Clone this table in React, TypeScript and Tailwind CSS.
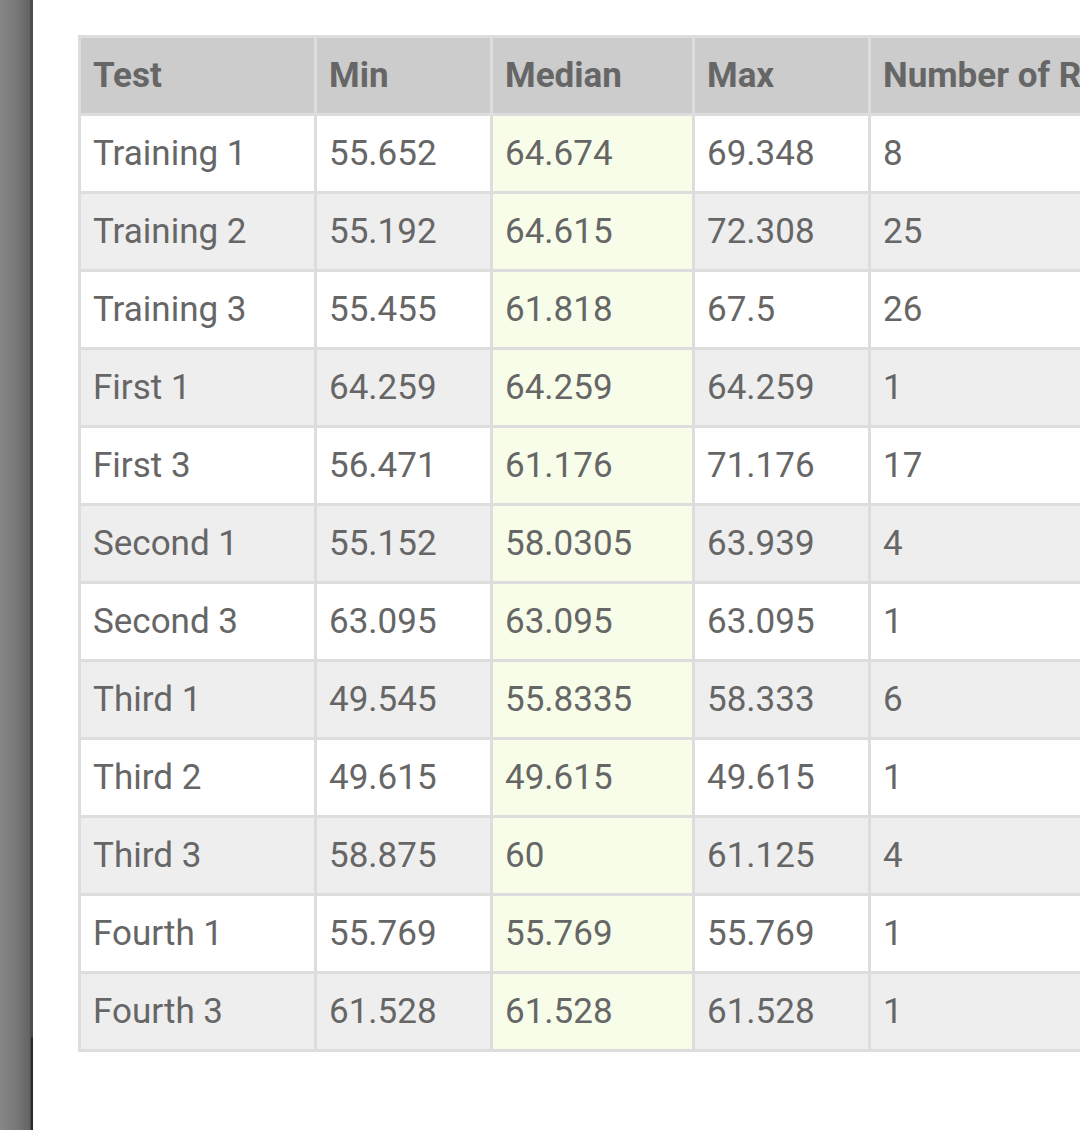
import React from "react";

const rows: [string, string, string, string, string][] = [
  ["Training 1", "55.652", "64.674", "69.348", "8"],
  ["Training 2", "55.192", "64.615", "72.308", "25"],
  ["Training 3", "55.455", "61.818", "67.5", "26"],
  ["First 1", "64.259", "64.259", "64.259", "1"],
  ["First 3", "56.471", "61.176", "71.176", "17"],
  ["Second 1", "55.152", "58.0305", "63.939", "4"],
  ["Second 3", "63.095", "63.095", "63.095", "1"],
  ["Third 1", "49.545", "55.8335", "58.333", "6"],
  ["Third 2", "49.615", "49.615", "49.615", "1"],
  ["Third 3", "58.875", "60", "61.125", "4"],
  ["Fourth 1", "55.769", "55.769", "55.769", "1"],
  ["Fourth 3", "61.528", "61.528", "61.528", "1"],
];

const headers = ["Test", "Min", "Median", "Max", "Number of Results"];

export default function App() {
  return (
    <div
      className="flex h-[1130px] w-[1080px] overflow-hidden bg-white text-[#666]"
      style={{ fontFamily: "Roboto, 'Noto Sans', sans-serif" }}
    >
      <div className="relative h-full w-[33px] shrink-0 bg-gradient-to-r from-[#878787] via-[#777] to-[#5f5f5f]">
        <div className="absolute right-0 top-0 h-full w-[3px] bg-[#4d4d4d]" />
        <div className="absolute right-0 top-[1037px] bottom-0 w-[2px] bg-[#1f3320]" />
      </div>
      <div className="pl-[45px] pt-[35px]">
        <div className="grid w-max grid-cols-[233px_173px_199px_173px_320px] gap-[3px] bg-[#dddddd] p-[3px] text-[35px] leading-none">
          {headers.map((h) => (
            <div
              key={h}
              className="flex h-[75px] items-center whitespace-nowrap bg-[#cccccc] px-[12px] pb-[1px] font-bold"
            >
              {h}
            </div>
          ))}
          {rows.map((r, i) => {
            const bg = i % 2 === 0 ? "bg-white" : "bg-[#eeeeee]";
            return (
              <React.Fragment key={r[0]}>
                {r.map((c, j) => (
                  <div
                    key={j}
                    className={`flex h-[75px] items-center whitespace-nowrap px-[12px] pb-[1px] ${
                      j === 2 ? "bg-[#f7fde8]" : bg
                    }`}
                  >
                    {c}
                  </div>
                ))}
              </React.Fragment>
            );
          })}
        </div>
      </div>
    </div>
  );
}
